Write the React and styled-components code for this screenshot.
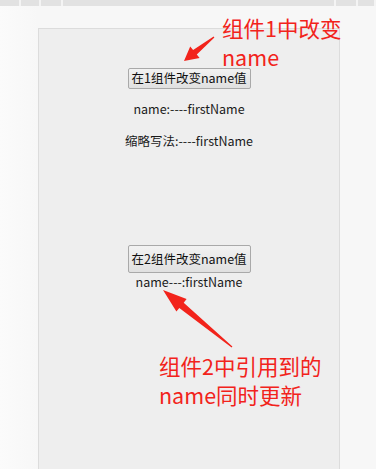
import React from "react";
import styled, { createGlobalStyle } from "styled-components";

const GlobalStyle = createGlobalStyle`
  html, body {
    margin: 0;
    padding: 0;
    background: #f7f7f7;
    font-family: "Noto Sans CJK SC", "Noto Sans", sans-serif;
  }
`;

const Page = styled.div`
  position: relative;
  width: 376px;
  height: 469px;
  overflow: hidden;
  background: linear-gradient(to right, #fbfbfb 0, #f7f7f7 38px, #f7f7f7 100%);
`;

const TabStrip = styled.div`
  display: flex;
  justify-content: space-between;
  height: 6px;
  background: #e2e2e2;
`;

const TabGroup = styled.div`
  display: flex;
`;

const Tab = styled.div`
  width: ${(p) => p.w}px;
  height: 6px;
  border-right: 2px solid #f4f4f4;
  box-sizing: border-box;
`;

const Body = styled.div`
  padding: 22px 0 0 38px;
  height: 100%;
  box-sizing: border-box;
`;

const Panel = styled.div`
  width: 302px;
  height: 460px;
  box-sizing: border-box;
  background: #eeeeee;
  border: 1px solid #dcdcdc;
  border-bottom: none;
  display: flex;
  flex-direction: column;
  align-items: center;
  padding-top: 39px;
`;

const Button = styled.button`
  font-family: "Noto Sans CJK SC", sans-serif;
  font-size: 12.5px;
  color: #111;
  height: ${(p) => p.h}px;
  padding: 0 3px;
  width: 123px;
  background: linear-gradient(#f2f2f2, #e0e0e0);
  border: 1px solid #a9a9a9;
  border-radius: 2px;
  line-height: 1;
  white-space: nowrap;
  margin-top: ${(p) => p.top || 0}px;
`;

const Line = styled.div`
  font-size: 12.5px;
  line-height: 16px;
  color: #1a1a1a;
  margin-top: ${(p) => p.top}px;
`;

const Note = styled.div`
  position: absolute;
  left: ${(p) => p.x}px;
  top: ${(p) => p.y}px;
  color: #f2231b;
  font-size: 21.5px;
  line-height: 29px;
  white-space: nowrap;
`;

const Overlay = styled.svg`
  position: absolute;
  left: 0;
  top: 0;
`;

function arrowPoints(tail, tip, head = 13, wing = 6.5, neck = 2.6) {
  const dx = tip[0] - tail[0];
  const dy = tip[1] - tail[1];
  const len = Math.hypot(dx, dy);
  const ux = dx / len;
  const uy = dy / len;
  const nx = -uy;
  const ny = ux;
  const bx = tip[0] - ux * head;
  const by = tip[1] - uy * head;
  const p = (x, y) => `${x.toFixed(1)},${y.toFixed(1)}`;
  return [
    p(tail[0] + nx * 0.6, tail[1] + ny * 0.6),
    p(bx + nx * neck, by + ny * neck),
    p(bx + nx * wing, by + ny * wing),
    p(tip[0], tip[1]),
    p(bx - nx * wing, by - ny * wing),
    p(bx - nx * neck, by - ny * neck),
    p(tail[0] - nx * 0.6, tail[1] - ny * 0.6),
  ].join(" ");
}

export default function App() {
  return (
    <>
      <GlobalStyle />
      <Page>
        <TabStrip>
          <TabGroup>
            <Tab w={21} />
            <Tab w={20} />
            <Tab w={22} />
          </TabGroup>
          <TabGroup>
            <Tab w={24} />
            <Tab w={22} />
            <Tab w={18} />
          </TabGroup>
        </TabStrip>
        <Body>
          <Panel>
            <Button h={21}>在1组件改变name值</Button>
            <Line top={12}>name:----firstName</Line>
            <Line top={16}>缩略写法:----firstName</Line>
            <Button h={28} top={96}>在2组件改变name值</Button>
            <Line top={1}>name---:firstName</Line>
          </Panel>
        </Body>
        <Note x={222} y={13}>组件1中改变<br />name</Note>
        <Note x={159} y={351}>组件2中引用到的<br />name同时更新</Note>
        <Overlay width="376" height="469">
          <polygon points={arrowPoints([214, 37], [184, 61], 14, 7.5, 3)} fill="#f2231b" />
          <polygon points={arrowPoints([232, 347], [163, 290], 24, 8, 3.4)} fill="#f2231b" />
        </Overlay>
      </Page>
    </>
  );
}
